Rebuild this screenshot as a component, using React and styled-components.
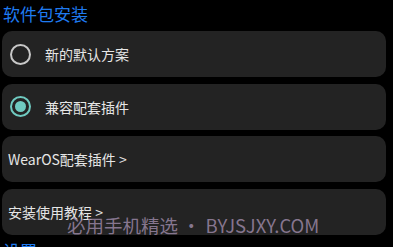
import styled, { createGlobalStyle } from 'styled-components'

const Global = createGlobalStyle`
  html, body {
    margin: 0;
    padding: 0;
    background: #000;
    overflow: hidden;
  }
  body {
    font-family: "Noto Sans CJK SC", "Noto Sans", sans-serif;
  }
`

const Page = styled.div`
  position: relative;
  width: 393px;
  height: 247px;
  overflow: hidden;
  padding: 0 7px 0 2px;
  box-sizing: border-box;
`

const Title = styled.div`
  color: #1f7bf0;
  font-size: 17px;
  line-height: 20px;
  padding: 4px 0 0 1px;
  height: 27px;
  box-sizing: border-box;
`

const List = styled.div`
  display: flex;
  flex-direction: column;
  gap: 6.6px;
  padding-top: 4px;
`

const Card = styled.div`
  height: 46px;
  background: #232323;
  border-radius: 10px;
  display: flex;
  align-items: center;
  padding-left: ${p => (p.$radio ? '8px' : '6px')};
  color: #e6e6e6;
  font-size: 14px;
  gap: 14px;
`

const Radio = styled.span`
  width: 21px;
  height: 21px;
  box-sizing: border-box;
  border-radius: 50%;
  border: 2.5px solid ${p => (p.$on ? '#6fcac0' : '#c8c8c8')};
  display: flex;
  align-items: center;
  justify-content: center;
  flex-shrink: 0;
  &::after {
    content: '';
    display: ${p => (p.$on ? 'block' : 'none')};
    width: 11px;
    height: 11px;
    border-radius: 50%;
    background: #6fcac0;
  }
`

const Label = styled.span`
  line-height: 20px;
`

const Next = styled.div`
  color: #1f7bf0;
  font-size: 17px;
  line-height: 20px;
  padding: 6px 0 0 1px;
`

const Watermark = styled.div`
  position: absolute;
  left: 67px;
  top: 214px;
  font-size: 18.5px;
  line-height: 22px;
  color: rgba(158, 138, 168, 0.82);
  white-space: nowrap;
`

const Dot = styled.span`
  margin: 0 5px 0 4px;
`

export default function App() {
  return (
    <Page>
      <Global />
      <Title>软件包安装</Title>
      <List>
        <Card $radio>
          <Radio />
          <Label>新的默认方案</Label>
        </Card>
        <Card $radio>
          <Radio $on />
          <Label>兼容配套插件</Label>
        </Card>
        <Card>
          <Label>WearOS配套插件 &gt;</Label>
        </Card>
        <Card>
          <Label>安装使用教程 &gt;</Label>
        </Card>
      </List>
      <Next>设置</Next>
      <Watermark>
        必用手机精选<Dot>•</Dot>BYJSJXY.COM
      </Watermark>
    </Page>
  )
}
